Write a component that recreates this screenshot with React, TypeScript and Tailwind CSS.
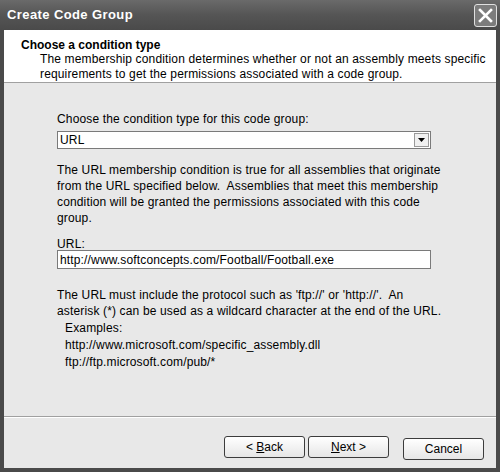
const Button = ({ children }: { children: React.ReactNode }) => (
  <button className="w-[81px] h-[22px] rounded-[3px] border border-[#3c3c3c] bg-gradient-to-b from-[#ffffff] to-[#e6e6e6] text-[12px] text-black">
    {children}
  </button>
);

export default function App() {
  return (
    <div
      className="w-[500px] h-[472px] flex flex-col bg-[#4a4a4a] overflow-hidden"
      style={{ fontFamily: '"Liberation Sans", Arial, sans-serif' }}
    >
      {/* Title bar */}
      <div className="h-[30px] shrink-0 flex items-center justify-between pl-[7px] pr-[3px] bg-gradient-to-b from-[#6a6a6a] via-[#555555] to-[#4a4a4a]">
        <span className="text-white text-[13px] font-bold tracking-[0.4px]">Create Code Group</span>
        <div className="w-[23px] h-[23px] rounded-[3px] border border-[#e0e0e0] bg-[#7c7c7c] flex items-center justify-center">
          <svg width="15" height="15" viewBox="0 0 15 15">
            <path d="M2 2 L13 13 M13 2 L2 13" stroke="#ffffff" strokeWidth="2.6" strokeLinecap="square" />
          </svg>
        </div>
      </div>

      {/* Client area */}
      <div className="flex-1 min-h-0 mx-[4px] mb-[4px] flex flex-col bg-[#e8e8e8] tracking-[0.15px] whitespace-nowrap">
        {/* Header */}
        <div className="h-[53px] shrink-0 bg-white border-b border-[#a0a0a0] pl-[17px] pt-[8px]">
          <div className="text-[12px] font-bold text-black leading-[14px] tracking-normal">Choose a condition type</div>
          <div className="pl-[19px] text-[12px] text-black leading-[15px]">
            The membership condition determines whether or not an assembly meets specific
            <br />
            requirements to get the permissions associated with a code group.
          </div>
        </div>

        {/* Body */}
        <div className="flex-1 min-h-0 pl-[53px] pr-[40px] pt-[29px] text-[12px] text-black">
          <div className="w-[374px]">
            <div className="leading-[15px]">Choose the condition type for this code group:</div>
            <div className="mt-[4px] h-[18px] bg-white border border-[#7a7a7a] flex items-center justify-between pl-[2px] pr-[1px]">
              <span>URL</span>
              <div className="w-[15px] h-[14px] border border-[#9a9a9a] bg-[#f0f0f0] flex items-center justify-center">
                <svg width="7" height="4" viewBox="0 0 7 4">
                  <path d="M0 0 H7 L3.5 4 Z" fill="#000" />
                </svg>
              </div>
            </div>

            <div className="mt-[13px] leading-[16px]">
              The URL membership condition is true for all assemblies that originate
              <br />
              from the URL specified below.&nbsp; Assemblies that meet this membership
              <br />
              condition will be granted the permissions associated with this code
              <br />
              group.
            </div>

            <div className="mt-[13px] leading-[11px]">URL:</div>
            <div className="h-[19px] bg-white border border-[#7a7a7a] flex items-center pl-[2px]">
              http://www.softconcepts.com/Football/Football.exe
            </div>

            <div className="mt-[18px] leading-[16px]">
              The URL must include the protocol such as 'ftp://' or 'http://'.&nbsp; An
              <br />
              asterisk (*) can be used as a wildcard character at the end of the URL.
            </div>

            <div className="pl-[8px] mt-[1px] leading-[17px]">
              <div>Examples:</div>
              <div>http://www.microsoft.com/specific_assembly.dll</div>
              <div>ftp://ftp.microsoft.com/pub/*</div>
            </div>
          </div>
        </div>

        {/* Footer */}
        <div className="h-[52px] shrink-0 border-t border-[#a0a0a0] shadow-[inset_0_1px_0_#ffffff] flex items-start justify-end pr-[12px] pt-[19px] tracking-normal">
          <div className="flex gap-[3px]">
            <Button>
              &lt; <u>B</u>ack
            </Button>
            <Button>
              <u>N</u>ext &gt;
            </Button>
          </div>
          <div className="ml-[14px]">
            <Button>Cancel</Button>
          </div>
        </div>
      </div>
    </div>
  );
}
